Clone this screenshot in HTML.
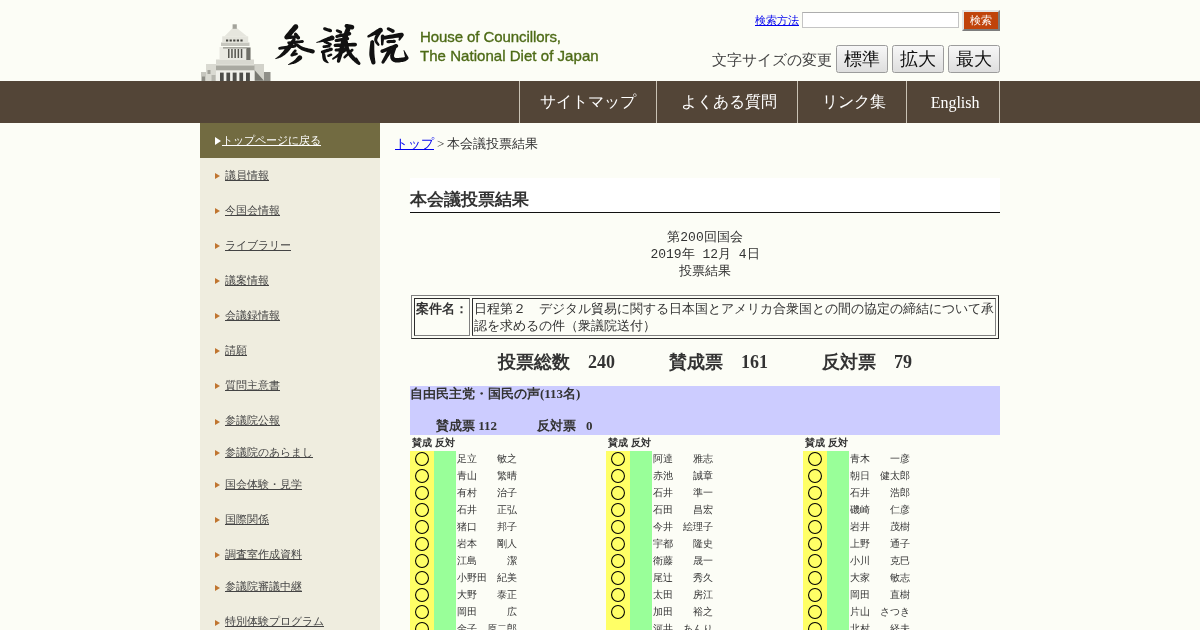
<!DOCTYPE html>
<html lang="ja"><head><meta charset="utf-8"><title>本会議投票結果</title>
<style>
html,body{margin:0;padding:0}
body{width:1200px;height:630px;overflow:hidden;background:#fcfdf6;color:#333;font-family:"Liberation Serif",serif;font-size:13px;position:relative}
a{color:#0000ee}
#hd{position:absolute;left:200px;top:0;width:800px;height:81px}
#hd svg{position:absolute;left:0;top:0}
.en{position:absolute;left:220px;top:26.5px;font-family:"Liberation Sans",sans-serif;font-size:15px;line-height:19.1px;letter-spacing:0.04px;color:#4d6a16;-webkit-text-stroke:0.35px #4d6a16;white-space:nowrap}
.en .l1{letter-spacing:-0.08px}
.sh{position:absolute;left:555px;top:13px;font-size:11px;line-height:14px;white-space:nowrap}
.inp{position:absolute;left:602px;top:12px;width:155px;height:14px;background:#fff;border:1px solid #c4c4c4;border-top-color:#adadad}
.sbtn{position:absolute;left:762px;top:10px;width:34px;height:17px;border:2px solid #e4e4e4;border-right-color:#7d7d7d;border-bottom-color:#7d7d7d;background:#c0430b;color:#fff;font-size:11px;line-height:17px;text-align:center}
.fs{position:absolute;left:512px;top:51px;font-size:15px;line-height:18px;color:#444;white-space:nowrap}
.fb{position:absolute;top:45px;height:26px;border:1px solid #9c9c9c;border-radius:2.5px;background:linear-gradient(#f7f7f7,#dedede);color:#111;font-size:18px;line-height:27px;text-align:center}
#nav{position:absolute;left:0;top:81px;width:1200px;height:42px;background:#534537}
#nav i{position:absolute;top:0;width:1px;height:42px;background:#c9c2b4}
#nav span{position:absolute;top:0;height:42px;line-height:41px;color:#fff;font-size:16px;text-align:center;white-space:nowrap}
#nav span.eng{font-size:16px}
#side{position:absolute;left:200px;top:123px;width:180px;height:507px;background:#efeddf;font-size:11px}
#side .top{position:absolute;left:0;top:0;width:180px;height:35px;background:#726b41}
#side .top a{position:absolute;left:22px;top:10px;line-height:14px;color:#fff;white-space:nowrap}
#side .top .tri{position:absolute;left:14.5px;top:13.5px;border-left:6px solid #fff;border-top:4px solid transparent;border-bottom:4px solid transparent}
.mi{position:absolute;left:0;width:180px;height:16px}
.mi a{position:absolute;left:25px;top:0.3px;line-height:14px;color:#444;white-space:nowrap}
.mi .tri{position:absolute;left:14.7px;top:5.5px;border-left:5px solid #c07530;border-top:3.5px solid transparent;border-bottom:3.5px solid transparent}
#bc{position:absolute;left:395px;top:135px;font-size:13px;line-height:17px;color:#333;white-space:nowrap;word-spacing:-0.35px}
#ttl{position:absolute;left:410px;top:178px;width:590px;height:34px;margin:0;background:#fff;border-bottom:1px solid #111;font-size:17px;line-height:44px;font-weight:bold;color:#333}
#pre{position:absolute;left:410px;top:229px;width:590px;margin:0;text-align:center;font-family:"Liberation Mono",monospace;font-size:13px;line-height:17px;color:#333}
#anken{position:absolute;left:411px;top:295px;width:588px;border-spacing:2px;font-size:13px;line-height:17px;color:#333}
#anken th{vertical-align:top;white-space:nowrap;padding:1px;text-align:left}
#anken td{padding:1px}
#tot{position:absolute;left:410px;top:350px;width:590px;text-align:center;font-size:18px;line-height:24px;font-weight:bold;color:#333;white-space:nowrap}
#party{position:absolute;left:410px;top:386px;width:590px;height:49px;background:#ccccff;font-weight:bold;color:#333;font-size:13px}
#party .pn{position:absolute;left:0px;top:0;line-height:16px;white-space:nowrap}
#party .pv span{position:absolute;top:32px;line-height:16px;white-space:nowrap}
.col{position:absolute;top:435px;width:196px;height:195px;font-size:10px}
.col .ch{position:absolute;left:2px;top:0;height:16px;line-height:15px;font-weight:bold;color:#333}
.col .ch span{position:absolute;left:0;top:0;white-space:nowrap}
.col .ye{position:absolute;left:0;top:16px;width:24px;height:180px;background:#ffff66}
.col .gr{position:absolute;left:24px;top:16px;width:22px;height:180px;background:#99ff99}
.col .r{position:absolute;left:0;width:196px;height:17px}
.col .r span{position:absolute;left:47px;top:-0.5px;line-height:17px;color:#333;white-space:nowrap}
.col .r .o{position:absolute;left:4px;top:0.9px;width:16px;height:16px;overflow:visible}

#wrap{position:absolute;left:0;top:0;width:1200px;height:630px;will-change:opacity}

</style></head><body>
<div id="wrap">
<div id="hd"><svg width="420" height="81" viewBox="200 0 420 81">
<defs><filter id="bl" x="-5%" y="-5%" width="110%" height="110%"><feGaussianBlur stdDeviation="0.35"/></filter></defs>
<g filter="url(#bl)">
<!-- building -->
<rect x="201" y="72" width="6" height="9" fill="#c6c6be"/><rect x="202" y="76.5" width="3" height="4.5" fill="#8d8d86"/>
<rect x="264" y="72" width="6.5" height="9" fill="#8f8f88"/>
<rect x="206" y="64" width="58" height="17" fill="#e4e4dc"/>
<rect x="206" y="64" width="10" height="17" fill="#dadad2"/><rect x="207.5" y="70" width="3" height="4" fill="#a2a29a"/><rect x="211.5" y="75" width="4" height="6" fill="#b6b6ae"/>
<rect x="254" y="64" width="10" height="17" fill="#d2d2ca"/>
<polygon points="254.5,70 264,80.8 254.5,80.8" fill="#77776f"/>
<rect x="216" y="65.5" width="38.5" height="5" fill="#a9a9a1"/>
<rect x="216" y="70.5" width="38.5" height="10.5" fill="#f0f0ea"/>
<rect x="220" y="72.6" width="3.7" height="8.4" fill="#4e4e4a"/>
<rect x="226.4" y="72.6" width="3.7" height="8.4" fill="#4e4e4a"/>
<rect x="232.7" y="72.6" width="3.9" height="8.4" fill="#4e4e4a"/>
<rect x="239.4" y="72.6" width="3.7" height="8.4" fill="#4e4e4a"/>
<rect x="246" y="72.6" width="3.9" height="8.4" fill="#4e4e4a"/>
<rect x="216" y="59.5" width="38" height="5" fill="#d8d8d0"/>
<rect x="219.5" y="47" width="31" height="13" fill="#e9e9e2"/>
<rect x="246.3" y="47.5" width="4.2" height="12.5" fill="#6f6f69"/>
<rect x="223" y="47" width="24" height="1.6" fill="#a6a69e"/>
<rect x="228" y="49" width="1.5" height="9" fill="#55554f"/>
<rect x="231.2" y="49" width="1.5" height="9" fill="#55554f"/>
<rect x="234.4" y="49" width="1.5" height="9" fill="#55554f"/>
<rect x="237.6" y="49" width="1.5" height="9" fill="#55554f"/>
<rect x="240.8" y="49" width="1.5" height="9" fill="#55554f"/>
<rect x="221" y="42.5" width="28.5" height="3.5" fill="#c6c6be"/>
<rect x="222.2" y="36.3" width="26" height="6.5" fill="#e4e4dc"/>
<rect x="226" y="39.5" width="2.2" height="2" fill="#44443f"/>
<rect x="229.6" y="39.5" width="2.2" height="2" fill="#44443f"/>
<rect x="233.2" y="39.5" width="2.2" height="2" fill="#44443f"/>
<rect x="236.8" y="39.5" width="2.2" height="2" fill="#44443f"/>
<rect x="240.4" y="39.5" width="2.2" height="2" fill="#44443f"/>
<polygon points="224.3,36.5 232.6,28 236.8,28 247.3,36.5" fill="#e6e6de"/>
<rect x="232.6" y="24.3" width="4.2" height="4.5" fill="#a3a39b"/>
</g>
<!-- calligraphy -->
<path fill="#111" fill-rule="nonzero" d="M293.8 25.0 L292.7 26.3 L291.6 27.7 L290.4 29.0 L289.3 30.3 L288.2 31.7 L287.1 33.0 L286.0 34.3 L284.9 35.7 L284.3 36.8 L284.4 38.0 L285.1 39.0 L286.2 39.5 L287.4 39.4 L288.4 38.7 L289.6 37.5 L290.7 36.2 L291.9 34.9 L293.1 33.6 L294.2 32.3 L295.4 31.0 L296.6 29.7 L297.7 28.4 L298.3 27.2 L298.2 25.9 L297.5 24.7 L296.3 24.2 L294.9 24.2ZM286.6 39.4 L288.0 39.2 L289.4 39.1 L290.8 38.9 L292.1 38.8 L293.5 38.6 L294.9 38.5 L296.3 38.3 L297.7 38.2 L298.4 37.9 L298.9 37.2 L299.1 36.5 L298.8 35.7 L298.2 35.2 L297.4 35.1 L296.0 35.2 L294.6 35.3 L293.2 35.4 L291.8 35.5 L290.5 35.6 L289.1 35.8 L287.7 35.9 L286.3 36.0 L285.5 36.3 L284.9 37.0 L284.8 37.8 L285.1 38.7 L285.8 39.2ZM294.3 35.4 L294.6 35.8 L294.9 36.2 L295.2 36.7 L295.6 37.1 L295.9 37.5 L296.2 38.0 L296.5 38.4 L296.8 38.9 L297.6 39.4 L298.5 39.5 L299.4 39.2 L300.0 38.4 L300.1 37.5 L299.7 36.6 L299.4 36.2 L299.0 35.8 L298.7 35.4 L298.3 35.0 L298.0 34.5 L297.6 34.1 L297.3 33.7 L296.9 33.3 L296.2 32.8 L295.4 32.6 L294.6 33.0 L294.0 33.7 L293.9 34.5ZM288.7 44.0 L290.5 43.9 L292.2 43.7 L293.9 43.6 L295.7 43.4 L297.4 43.3 L299.1 43.2 L300.9 43.0 L302.6 42.9 L303.3 42.6 L303.8 42.1 L303.9 41.4 L303.6 40.7 L303.1 40.2 L302.3 40.1 L300.6 40.2 L298.9 40.4 L297.1 40.6 L295.4 40.7 L293.7 40.9 L292.0 41.1 L290.2 41.2 L288.5 41.4 L287.9 41.6 L287.4 42.1 L287.3 42.8 L287.5 43.4 L288.1 43.9ZM292.8 38.6 L292.3 39.2 L291.6 40.1 L290.8 41.2 L289.9 42.3 L289.0 43.5 L288.1 44.7 L287.3 45.8 L286.5 46.8 L285.8 47.7 L285.1 48.6 L284.4 49.6 L283.7 50.5 L283.0 51.4 L282.3 52.3 L281.6 53.1 L280.9 53.8 L280.2 54.5 L279.5 55.2 L278.7 55.9 L277.8 56.6 L277.1 57.2 L276.3 57.7 L275.7 58.2 L275.3 58.6 L275.1 58.7 L275.1 58.8 L275.1 59.0 L275.3 59.1 L275.4 59.2 L275.6 59.1 L276.1 58.9 L276.8 58.7 L277.7 58.5 L278.7 58.2 L279.7 57.8 L280.8 57.4 L281.9 56.8 L282.9 56.2 L283.8 55.6 L284.8 54.9 L285.8 54.1 L286.7 53.3 L287.6 52.5 L288.5 51.6 L289.4 50.6 L290.2 49.6 L291.0 48.5 L291.8 47.2 L292.6 45.8 L293.3 44.4 L294.0 43.1 L294.6 42.0 L295.0 41.0 L295.4 40.3 L295.6 39.5 L295.5 38.7 L294.9 38.1 L294.1 37.9 L293.4 38.0ZM279.8 49.7 L281.7 49.5 L283.6 49.2 L285.5 48.9 L287.5 48.7 L289.4 48.4 L291.3 48.1 L293.2 47.9 L295.1 47.6 L295.8 47.3 L296.3 46.6 L296.4 45.8 L296.1 45.1 L295.4 44.6 L294.6 44.5 L292.7 44.8 L290.8 45.1 L288.9 45.4 L287.0 45.7 L285.1 46.0 L283.2 46.3 L281.3 46.6 L279.4 46.9 L278.7 47.2 L278.3 47.8 L278.2 48.5 L278.5 49.2 L279.1 49.7ZM294.1 44.3 L294.6 44.7 L295.3 45.3 L296.1 46.1 L297.1 46.9 L298.1 47.8 L299.3 48.7 L300.5 49.5 L301.7 50.2 L303.1 50.8 L304.5 51.3 L306.1 51.8 L307.6 52.2 L309.1 52.6 L310.4 52.9 L311.5 53.2 L312.2 53.4 L313.3 53.4 L314.2 52.8 L314.8 51.9 L314.7 50.8 L314.2 49.9 L313.2 49.4 L312.4 49.2 L311.3 48.9 L310.0 48.7 L308.5 48.4 L307.1 48.0 L305.6 47.7 L304.3 47.3 L303.2 46.9 L302.2 46.4 L301.1 45.9 L300.0 45.2 L299.0 44.5 L297.9 43.8 L297.0 43.2 L296.2 42.6 L295.6 42.2 L295.0 41.9 L294.3 42.0 L293.8 42.4 L293.6 43.1 L293.7 43.7ZM294.1 49.9 L293.7 50.5 L293.3 51.0 L292.8 51.6 L292.4 52.1 L292.0 52.7 L291.5 53.3 L291.1 53.8 L290.6 54.4 L290.4 55.0 L290.4 55.6 L290.8 56.2 L291.4 56.5 L292.1 56.4 L292.7 56.0 L293.1 55.5 L293.6 54.9 L294.0 54.4 L294.5 53.9 L295.0 53.4 L295.4 52.8 L295.9 52.3 L296.3 51.8 L296.6 51.1 L296.6 50.3 L296.1 49.7 L295.5 49.4 L294.7 49.5ZM292.0 56.5 L292.6 56.4 L293.2 56.2 L293.8 56.0 L294.5 55.8 L295.1 55.7 L295.7 55.5 L296.3 55.3 L296.9 55.1 L297.5 54.8 L297.8 54.2 L297.8 53.5 L297.4 52.9 L296.8 52.6 L296.1 52.7 L295.5 52.9 L294.9 53.1 L294.3 53.3 L293.7 53.5 L293.1 53.7 L292.5 53.9 L291.9 54.1 L291.3 54.3 L290.8 54.6 L290.5 55.2 L290.5 55.8 L290.9 56.3 L291.4 56.6ZM298.1 55.9 L297.8 56.3 L297.4 56.8 L296.9 57.4 L296.3 58.1 L295.8 58.8 L295.2 59.4 L294.6 60.0 L294.0 60.6 L293.4 61.0 L292.7 61.6 L291.8 62.1 L291.0 62.6 L290.1 63.1 L289.4 63.5 L288.7 63.9 L288.2 64.2 L288.1 64.3 L288.0 64.5 L288.0 64.7 L288.1 64.9 L288.3 64.9 L288.5 64.9 L289.1 64.8 L289.8 64.7 L290.7 64.5 L291.6 64.3 L292.7 64.1 L293.7 63.9 L294.7 63.6 L295.7 63.2 L296.6 62.8 L297.4 62.3 L298.3 61.7 L299.1 61.2 L299.9 60.6 L300.5 60.2 L301.1 59.8 L301.4 59.5 L302.1 58.5 L302.2 57.2 L301.6 56.0 L300.6 55.4 L299.3 55.3ZM324.2 30.2 L324.9 30.5 L325.6 30.7 L326.3 31.0 L327.0 31.3 L327.7 31.5 L328.4 31.8 L329.1 32.0 L329.8 32.3 L330.7 32.3 L331.5 31.9 L332.0 31.2 L332.0 30.3 L331.6 29.5 L330.9 29.1 L330.2 28.8 L329.5 28.6 L328.8 28.4 L328.0 28.2 L327.3 27.9 L326.6 27.7 L325.9 27.5 L325.2 27.3 L324.4 27.2 L323.6 27.6 L323.2 28.3 L323.1 29.1 L323.5 29.8ZM316.8 42.9 L317.5 42.8 L318.5 42.6 L319.6 42.5 L320.9 42.3 L322.2 42.1 L323.6 41.9 L324.8 41.8 L325.9 41.6 L326.9 41.4 L328.0 41.2 L329.0 41.1 L329.9 40.9 L330.8 40.7 L331.6 40.6 L332.3 40.4 L332.8 40.3 L333.9 39.7 L334.5 38.6 L334.5 37.3 L333.8 36.2 L332.7 35.6 L331.4 35.6 L330.9 35.8 L330.3 36.1 L329.6 36.4 L328.7 36.7 L327.8 37.1 L326.9 37.5 L325.9 37.9 L325.0 38.3 L323.9 38.8 L322.8 39.3 L321.6 39.8 L320.4 40.4 L319.2 40.9 L318.1 41.4 L317.2 41.8 L316.6 42.1 L316.4 42.2 L316.3 42.4 L316.3 42.6 L316.4 42.8 L316.6 42.9ZM324.1 42.9 L324.8 43.2 L325.5 43.6 L326.2 43.9 L326.9 44.3 L327.7 44.6 L328.4 45.0 L329.1 45.3 L329.8 45.7 L330.5 45.8 L331.2 45.6 L331.7 45.0 L331.8 44.3 L331.6 43.6 L331.0 43.1 L330.3 42.8 L329.5 42.4 L328.8 42.1 L328.1 41.8 L327.4 41.5 L326.7 41.2 L325.9 40.9 L325.2 40.5 L324.6 40.4 L323.9 40.6 L323.5 41.2 L323.4 41.8 L323.6 42.5ZM324.0 48.1 L324.7 48.0 L325.3 48.0 L326.0 47.9 L326.7 47.8 L327.3 47.8 L328.0 47.7 L328.7 47.6 L329.3 47.6 L330.0 47.4 L330.4 46.9 L330.5 46.2 L330.3 45.6 L329.8 45.1 L329.1 45.0 L328.5 45.0 L327.8 45.1 L327.1 45.1 L326.5 45.1 L325.8 45.1 L325.1 45.2 L324.5 45.2 L323.8 45.2 L323.1 45.5 L322.6 46.0 L322.5 46.8 L322.7 47.5 L323.3 48.0ZM322.8 53.5 L323.9 53.2 L325.0 52.9 L326.1 52.5 L327.2 52.2 L328.3 51.9 L329.4 51.6 L330.5 51.3 L331.6 51.0 L332.4 50.5 L332.8 49.7 L332.8 48.8 L332.3 48.1 L331.5 47.7 L330.7 47.7 L329.6 48.1 L328.5 48.4 L327.4 48.8 L326.3 49.1 L325.2 49.5 L324.1 49.8 L323.0 50.2 L321.9 50.5 L321.2 50.9 L320.9 51.6 L320.9 52.5 L321.3 53.1 L322.0 53.5ZM322.0 53.8 L322.0 54.2 L322.1 54.9 L322.1 55.7 L322.2 56.6 L322.3 57.6 L322.5 58.6 L322.8 59.5 L323.2 60.4 L323.7 61.1 L324.4 61.7 L325.1 62.1 L325.7 62.5 L326.4 62.7 L326.9 62.9 L327.4 63.1 L327.7 63.2 L328.0 63.3 L328.3 63.3 L328.6 63.1 L328.7 62.8 L328.7 62.4 L328.5 62.2 L328.2 61.9 L327.9 61.5 L327.5 61.0 L327.2 60.6 L326.8 60.1 L326.5 59.6 L326.3 59.2 L326.2 58.9 L326.1 58.4 L325.9 57.8 L325.7 57.0 L325.6 56.1 L325.4 55.3 L325.3 54.5 L325.2 53.8 L325.1 53.3 L324.7 52.6 L324.1 52.1 L323.3 52.0 L322.6 52.3 L322.1 52.9ZM329.0 57.0 L329.3 56.8 L329.6 56.7 L330.0 56.5 L330.3 56.4 L330.6 56.2 L330.9 56.1 L331.3 55.9 L331.6 55.7 L332.1 55.4 L332.3 54.8 L332.2 54.2 L331.8 53.7 L331.3 53.5 L330.7 53.6 L330.3 53.7 L330.0 53.8 L329.7 54.0 L329.3 54.1 L329.0 54.2 L328.6 54.4 L328.3 54.5 L328.0 54.6 L327.4 55.0 L327.2 55.7 L327.3 56.3 L327.7 56.9 L328.3 57.1ZM346.1 28.0 L346.8 28.2 L347.4 28.4 L348.1 28.5 L348.8 28.7 L349.4 28.9 L350.1 29.1 L350.7 29.3 L351.4 29.5 L352.6 29.5 L353.6 28.9 L354.2 27.8 L354.2 26.6 L353.6 25.5 L352.5 25.0 L351.8 24.8 L351.1 24.7 L350.5 24.6 L349.8 24.4 L349.1 24.3 L348.4 24.2 L347.8 24.1 L347.1 23.9 L346.0 23.9 L345.1 24.5 L344.6 25.5 L344.6 26.5 L345.2 27.4ZM346.5 26.5 L346.0 27.6 L345.4 29.2 L344.7 31.0 L344.0 33.1 L343.1 35.3 L342.3 37.6 L341.6 39.9 L340.9 42.1 L340.3 44.5 L339.7 47.1 L339.1 49.8 L338.5 52.5 L338.0 55.0 L337.6 57.3 L337.2 59.3 L336.9 60.7 L336.9 61.6 L337.4 62.4 L338.1 62.8 L339.0 62.8 L339.7 62.3 L340.2 61.6 L340.6 60.1 L341.2 58.3 L341.9 56.0 L342.7 53.5 L343.5 50.9 L344.3 48.3 L345.1 45.8 L345.8 43.6 L346.4 41.4 L347.2 39.2 L347.9 36.9 L348.6 34.7 L349.3 32.7 L350.0 30.8 L350.5 29.2 L350.9 28.0 L351.0 26.8 L350.4 25.7 L349.4 25.0 L348.2 24.9 L347.1 25.5ZM336.7 32.0 L337.1 32.2 L337.5 32.4 L337.9 32.6 L338.3 32.8 L338.8 33.0 L339.2 33.2 L339.6 33.4 L340.0 33.6 L340.8 33.7 L341.6 33.5 L342.1 32.8 L342.2 32.0 L341.9 31.3 L341.3 30.8 L340.9 30.6 L340.4 30.4 L340.0 30.2 L339.6 30.1 L339.1 29.9 L338.7 29.7 L338.3 29.5 L337.8 29.4 L337.1 29.2 L336.4 29.5 L335.9 30.1 L335.8 30.8 L336.1 31.5ZM337.2 37.9 L338.8 37.6 L340.3 37.3 L341.9 37.0 L343.5 36.7 L345.1 36.4 L346.6 36.1 L348.2 35.8 L349.8 35.5 L350.6 35.1 L351.2 34.3 L351.2 33.3 L350.8 32.5 L350.0 32.0 L349.1 31.9 L347.5 32.3 L345.9 32.7 L344.4 33.0 L342.8 33.4 L341.2 33.8 L339.7 34.1 L338.1 34.5 L336.5 34.9 L335.8 35.2 L335.4 35.9 L335.3 36.7 L335.7 37.4 L336.4 37.9ZM336.4 42.1 L337.8 41.9 L339.2 41.7 L340.6 41.4 L342.1 41.2 L343.5 41.0 L344.9 40.8 L346.4 40.6 L347.8 40.3 L348.6 40.0 L349.1 39.3 L349.2 38.4 L348.8 37.6 L348.1 37.1 L347.2 37.0 L345.8 37.3 L344.4 37.5 L343.0 37.8 L341.5 38.0 L340.1 38.3 L338.7 38.5 L337.3 38.8 L335.8 39.0 L335.1 39.4 L334.6 40.0 L334.6 40.8 L334.9 41.6 L335.5 42.0ZM335.4 47.1 L337.9 47.0 L340.4 46.9 L342.8 46.8 L345.3 46.7 L347.8 46.6 L350.3 46.5 L352.7 46.4 L355.2 46.4 L356.1 46.1 L356.8 45.4 L357.0 44.5 L356.7 43.6 L356.0 42.9 L355.1 42.7 L352.6 42.8 L350.1 43.0 L347.6 43.1 L345.2 43.2 L342.7 43.3 L340.2 43.4 L337.7 43.6 L335.3 43.7 L334.4 43.9 L333.8 44.6 L333.6 45.4 L333.9 46.3 L334.6 46.9ZM336.3 51.6 L337.7 51.5 L339.2 51.3 L340.6 51.1 L342.0 50.9 L343.4 50.7 L344.9 50.5 L346.3 50.3 L347.7 50.1 L348.5 49.8 L349.0 49.2 L349.1 48.4 L348.8 47.6 L348.1 47.1 L347.3 47.0 L345.9 47.2 L344.5 47.4 L343.0 47.6 L341.6 47.8 L340.2 48.0 L338.7 48.2 L337.3 48.4 L335.9 48.5 L335.1 48.9 L334.7 49.5 L334.5 50.3 L334.9 51.0 L335.5 51.5ZM343.5 49.1 L342.1 50.2 L340.7 51.4 L339.4 52.5 L338.0 53.6 L336.6 54.7 L335.3 55.9 L333.9 57.0 L332.5 58.1 L332.2 58.5 L332.1 59.0 L332.3 59.4 L332.7 59.7 L333.1 59.8 L333.6 59.6 L335.1 58.6 L336.6 57.7 L338.0 56.7 L339.5 55.7 L341.0 54.7 L342.5 53.8 L344.0 52.8 L345.5 51.8 L346.0 51.2 L346.2 50.3 L345.8 49.5 L345.2 48.9 L344.3 48.8ZM344.5 40.0 L344.5 40.7 L344.6 41.7 L344.6 42.9 L344.7 44.2 L344.8 45.6 L345.0 47.0 L345.2 48.3 L345.5 49.5 L345.9 50.6 L346.3 51.6 L346.7 52.6 L347.2 53.5 L347.7 54.3 L348.2 55.1 L348.7 55.9 L349.3 56.7 L349.9 57.5 L350.6 58.3 L351.3 59.0 L352.0 59.8 L352.7 60.4 L353.4 61.1 L354.0 61.6 L354.5 62.2 L355.1 62.6 L355.6 63.1 L356.1 63.4 L356.6 63.8 L357.0 64.0 L357.4 64.3 L357.7 64.5 L357.9 64.6 L358.7 65.0 L359.5 64.9 L360.1 64.4 L360.5 63.7 L360.4 62.9 L360.0 62.2 L359.7 62.0 L359.5 61.7 L359.2 61.4 L358.9 61.1 L358.5 60.7 L358.1 60.3 L357.7 59.9 L357.3 59.4 L356.8 58.8 L356.2 58.2 L355.6 57.6 L354.9 56.9 L354.3 56.2 L353.7 55.5 L353.1 54.9 L352.6 54.2 L352.1 53.5 L351.6 52.8 L351.2 52.1 L350.7 51.4 L350.3 50.7 L349.9 50.0 L349.6 49.2 L349.2 48.4 L348.9 47.4 L348.7 46.3 L348.4 45.1 L348.2 43.8 L348.0 42.5 L347.8 41.3 L347.7 40.4 L347.5 39.6 L347.2 38.9 L346.6 38.4 L345.8 38.3 L345.1 38.6 L344.6 39.2ZM360.3 62.8 L359.8 62.2 L359.4 61.6 L359.0 61.0 L358.6 60.4 L358.2 59.7 L357.8 59.1 L357.4 58.5 L357.0 57.9 L356.8 57.7 L356.6 57.6 L356.3 57.6 L356.1 57.8 L356.0 58.0 L356.0 58.3 L356.2 59.0 L356.4 59.7 L356.6 60.5 L356.8 61.2 L357.0 61.9 L357.2 62.6 L357.5 63.3 L357.7 64.0 L358.1 64.6 L358.8 64.9 L359.5 64.7 L360.1 64.3 L360.4 63.6ZM351.1 49.1 L350.2 50.0 L349.3 50.9 L348.3 51.8 L347.4 52.8 L346.5 53.7 L345.5 54.6 L344.6 55.6 L343.7 56.5 L343.4 57.0 L343.3 57.6 L343.6 58.1 L344.1 58.5 L344.7 58.5 L345.3 58.2 L346.3 57.3 L347.2 56.4 L348.2 55.5 L349.2 54.7 L350.2 53.8 L351.1 52.9 L352.1 52.0 L353.1 51.1 L353.5 50.5 L353.5 49.8 L353.1 49.1 L352.5 48.7 L351.8 48.7ZM369.0 37.4 L370.6 36.8 L372.1 36.2 L373.7 35.6 L375.2 35.0 L376.8 34.4 L378.4 33.8 L379.9 33.2 L381.5 32.6 L382.5 31.7 L382.9 30.4 L382.6 29.1 L381.7 28.1 L380.4 27.7 L379.1 28.0 L377.7 28.9 L376.3 29.8 L374.9 30.7 L373.5 31.7 L372.1 32.6 L370.7 33.5 L369.3 34.4 L367.9 35.3 L367.5 35.7 L367.3 36.3 L367.4 36.9 L367.8 37.4 L368.4 37.5ZM378.4 29.7 L378.1 30.4 L377.6 31.4 L376.9 32.5 L376.2 33.8 L375.5 35.2 L374.9 36.6 L374.4 37.9 L374.2 39.2 L374.2 40.5 L374.6 41.6 L375.1 42.6 L375.7 43.4 L376.2 44.1 L376.8 44.7 L377.2 45.1 L377.4 45.4 L377.9 45.8 L378.4 45.9 L379.0 45.7 L379.4 45.3 L379.5 44.7 L379.4 44.1 L379.1 43.7 L378.7 43.1 L378.3 42.5 L377.9 41.9 L377.5 41.2 L377.3 40.6 L377.2 40.1 L377.3 39.6 L377.5 38.9 L377.9 38.0 L378.6 36.8 L379.3 35.6 L380.1 34.4 L380.8 33.3 L381.4 32.3 L381.8 31.6 L382.1 30.6 L381.8 29.7 L381.1 29.0 L380.1 28.7 L379.1 29.0ZM370.3 42.0 L370.2 43.0 L370.1 44.3 L369.9 45.8 L369.7 47.6 L369.5 49.4 L369.4 51.2 L369.3 52.9 L369.3 54.4 L369.4 55.8 L369.7 57.2 L370.0 58.5 L370.3 59.7 L370.7 60.7 L371.0 61.6 L371.2 62.4 L371.4 63.0 L371.9 63.9 L372.8 64.5 L373.9 64.5 L374.8 64.1 L375.4 63.2 L375.5 62.1 L375.4 61.4 L375.2 60.6 L375.1 59.7 L375.0 58.6 L374.8 57.6 L374.7 56.4 L374.6 55.3 L374.5 54.1 L374.4 52.8 L374.4 51.3 L374.3 49.6 L374.3 47.8 L374.3 46.1 L374.3 44.5 L374.2 43.2 L374.2 42.2 L374.0 41.2 L373.3 40.5 L372.4 40.1 L371.4 40.4 L370.6 41.0ZM387.6 30.2 L388.1 30.5 L388.7 30.8 L389.3 31.1 L389.8 31.4 L390.4 31.7 L390.9 32.0 L391.5 32.4 L392.0 32.7 L393.0 32.9 L393.9 32.6 L394.5 31.9 L394.7 30.9 L394.4 30.0 L393.7 29.4 L393.1 29.2 L392.5 28.9 L391.9 28.6 L391.3 28.4 L390.7 28.1 L390.2 27.9 L389.6 27.6 L389.0 27.4 L388.2 27.2 L387.4 27.5 L386.9 28.1 L386.7 28.9 L387.0 29.6ZM380.8 36.3 L380.8 37.3 L380.8 38.3 L380.9 39.3 L380.9 40.3 L380.9 41.3 L381.0 42.3 L381.0 43.3 L381.0 44.3 L381.2 44.9 L381.6 45.4 L382.1 45.5 L382.7 45.4 L383.2 45.0 L383.4 44.4 L383.5 43.4 L383.6 42.4 L383.7 41.4 L383.9 40.5 L384.0 39.5 L384.1 38.5 L384.3 37.5 L384.4 36.5 L384.2 35.5 L383.6 34.8 L382.7 34.6 L381.7 34.8 L381.0 35.4ZM383.2 39.7 L385.6 39.4 L387.9 39.0 L390.3 38.7 L392.6 38.4 L395.0 38.0 L397.3 37.7 L399.6 37.4 L402.0 37.0 L403.0 36.6 L403.7 35.6 L403.8 34.5 L403.3 33.5 L402.4 32.8 L401.3 32.7 L398.9 33.1 L396.6 33.5 L394.3 34.0 L392.0 34.4 L389.6 34.8 L387.3 35.3 L385.0 35.7 L382.7 36.1 L381.8 36.5 L381.3 37.3 L381.2 38.2 L381.5 39.1 L382.3 39.6ZM399.9 33.9 L399.7 34.6 L399.6 35.3 L399.4 36.0 L399.2 36.7 L399.0 37.4 L398.9 38.0 L398.7 38.7 L398.5 39.4 L398.4 39.9 L398.6 40.3 L398.9 40.6 L399.4 40.7 L399.8 40.6 L400.1 40.2 L400.6 39.7 L401.0 39.1 L401.5 38.5 L401.9 38.0 L402.3 37.4 L402.8 36.9 L403.2 36.3 L403.6 35.8 L403.8 34.7 L403.5 33.7 L402.7 33.0 L401.6 32.8 L400.6 33.1ZM388.0 43.3 L388.8 43.2 L389.6 43.2 L390.4 43.1 L391.2 43.1 L392.0 43.0 L392.9 43.0 L393.7 42.9 L394.5 42.9 L395.2 42.6 L395.8 42.0 L395.9 41.2 L395.7 40.5 L395.1 39.9 L394.3 39.8 L393.5 39.8 L392.7 39.9 L391.9 39.9 L391.1 40.0 L390.2 40.0 L389.4 40.1 L388.6 40.1 L387.8 40.2 L387.0 40.4 L386.5 41.0 L386.3 41.8 L386.6 42.6 L387.2 43.1ZM382.8 52.9 L384.6 52.3 L386.4 51.6 L388.1 51.0 L389.9 50.3 L391.7 49.7 L393.4 49.0 L395.2 48.4 L397.0 47.7 L397.8 47.1 L398.2 46.2 L398.1 45.2 L397.5 44.4 L396.6 44.0 L395.6 44.1 L393.8 44.8 L392.1 45.4 L390.3 46.1 L388.6 46.8 L386.8 47.5 L385.1 48.2 L383.3 48.9 L381.5 49.5 L380.8 50.1 L380.4 50.9 L380.5 51.9 L381.0 52.6 L381.9 53.0ZM387.9 49.4 L387.1 50.9 L386.3 52.4 L385.5 53.9 L384.8 55.4 L384.0 57.0 L383.2 58.5 L382.4 60.0 L381.6 61.5 L381.4 62.3 L381.6 63.1 L382.2 63.6 L382.9 63.8 L383.7 63.6 L384.3 63.1 L385.2 61.6 L386.2 60.2 L387.1 58.8 L388.0 57.3 L388.9 55.9 L389.9 54.5 L390.8 53.0 L391.7 51.6 L392.0 50.5 L391.7 49.4 L390.9 48.6 L389.8 48.3 L388.7 48.6ZM393.2 46.9 L392.9 47.5 L392.5 48.4 L392.1 49.5 L391.6 50.7 L391.1 52.0 L390.6 53.3 L390.3 54.6 L390.1 55.7 L390.2 56.8 L390.3 57.7 L390.5 58.7 L391.0 59.6 L391.5 60.4 L392.3 61.1 L393.1 61.7 L394.1 62.1 L395.3 62.4 L396.5 62.5 L397.8 62.5 L399.1 62.4 L400.3 62.3 L401.5 62.1 L402.6 62.0 L403.5 61.8 L404.4 61.6 L405.2 61.3 L405.9 60.9 L406.4 60.6 L406.9 60.2 L407.3 60.0 L407.5 59.8 L407.7 59.6 L408.3 59.1 L408.6 58.2 L408.5 57.4 L407.9 56.7 L407.1 56.4 L406.2 56.6 L405.9 56.7 L405.5 56.8 L405.1 57.0 L404.7 57.1 L404.3 57.2 L403.8 57.3 L403.3 57.4 L402.8 57.4 L401.9 57.5 L400.9 57.7 L399.8 57.8 L398.7 57.9 L397.6 58.0 L396.6 58.0 L395.9 58.0 L395.4 57.9 L395.1 57.8 L394.9 57.7 L394.7 57.5 L394.5 57.3 L394.4 57.1 L394.2 56.8 L394.1 56.4 L394.0 55.9 L394.1 55.2 L394.3 54.3 L394.6 53.2 L395.0 52.0 L395.4 50.8 L395.8 49.7 L396.1 48.7 L396.4 48.0 L396.4 47.1 L396.1 46.3 L395.3 45.8 L394.5 45.8 L393.7 46.1ZM408.5 57.5 L408.0 56.6 L407.5 55.7 L406.9 54.8 L406.4 53.9 L405.9 53.0 L405.3 52.1 L404.8 51.2 L404.3 50.3 L404.1 50.2 L404.0 50.1 L403.8 50.1 L403.6 50.2 L403.5 50.4 L403.5 50.6 L403.8 51.6 L404.0 52.6 L404.2 53.7 L404.5 54.7 L404.7 55.7 L404.9 56.7 L405.2 57.7 L405.4 58.7 L405.9 59.4 L406.7 59.8 L407.6 59.7 L408.3 59.1 L408.6 58.3Z"/>
</svg>

<div class="en"><span class="l1">House of Councillors,</span><br>The National Diet of Japan</div>
<a class="sh" href="#">検索方法</a><div class="inp"></div><div class="sbtn">検索</div>
<div class="fs">文字サイズの変更</div>
<div class="fb" style="left:636px;width:50px">標準</div><div class="fb" style="left:692px;width:50px">拡大</div><div class="fb" style="left:748px;width:50px">最大</div>
</div>
<div id="nav"><i style="left:519px"></i><i style="left:656px"></i><i style="left:797px"></i><i style="left:906px"></i><i style="left:999px"></i>
<span style="left:520px;width:136px">サイトマップ</span><span style="left:659px;width:140px">よくある質問</span><span style="left:799.2px;width:109px">リンク集</span><span class="eng" style="left:909.6px;width:91px;top:1px">English</span></div>
<div id="side"><div class="top"><b class="tri"></b><a href="#">トップページに戻る</a></div>
<div class="mi" style="top:44.5px"><b class="tri"></b><a href="#">議員情報</a></div>
<div class="mi" style="top:79.5px"><b class="tri"></b><a href="#">今国会情報</a></div>
<div class="mi" style="top:114.5px"><b class="tri"></b><a href="#">ライブラリー</a></div>
<div class="mi" style="top:149.5px"><b class="tri"></b><a href="#">議案情報</a></div>
<div class="mi" style="top:184.5px"><b class="tri"></b><a href="#">会議録情報</a></div>
<div class="mi" style="top:219.5px"><b class="tri"></b><a href="#">請願</a></div>
<div class="mi" style="top:254.5px"><b class="tri"></b><a href="#">質問主意書</a></div>
<div class="mi" style="top:290.2px"><b class="tri"></b><a href="#">参議院公報</a></div>
<div class="mi" style="top:321.7px"><b class="tri"></b><a href="#">参議院のあらまし</a></div>
<div class="mi" style="top:353.6px"><b class="tri"></b><a href="#">国会体験・見学</a></div>
<div class="mi" style="top:388.3px"><b class="tri"></b><a href="#">国際関係</a></div>
<div class="mi" style="top:423.4px"><b class="tri"></b><a href="#">調査室作成資料</a></div>
<div class="mi" style="top:456.2px"><b class="tri"></b><a href="#">参議院審議中継</a></div>
<div class="mi" style="top:491.0px"><b class="tri"></b><a href="#">特別体験プログラム</a></div>
</div>
<div id="bc"><a href="#">トップ</a> &gt; 本会議投票結果</div>
<h2 id="ttl">本会議投票結果</h2>
<pre id="pre">第200回国会
2019年 12月 4日
投票結果</pre>
<table id="anken" border="1"><tr><th>案件名：</th><td>日程第２　デジタル貿易に関する日本国とアメリカ合衆国との間の協定の締結について承認を求めるの件（衆議院送付）</td></tr></table>
<div id="tot">投票総数　240　　　賛成票　161　　　反対票　79</div>
<div id="party"><div class="pn">自由民主党・国民の声(113名)</div><div class="pv"><span style="left:26px">賛成票 112</span><span style="left:127.3px">反対票 &nbsp;&nbsp;0</span></div></div>
<div class="col" style="left:410.00px"><div class="ch"><span>賛成</span><span style="left:23px">反対</span></div><div class="ye"></div><div class="gr"></div>
<div class="r" style="top:15px"><svg class="o" viewBox="0 0 16 16"><circle cx="8" cy="8" r="6.45" fill="none" stroke="#000" stroke-width="1.05"/></svg><span>足立　　敏之</span></div>
<div class="r" style="top:32px"><svg class="o" viewBox="0 0 16 16"><circle cx="8" cy="8" r="6.45" fill="none" stroke="#000" stroke-width="1.05"/></svg><span>青山　　繁晴</span></div>
<div class="r" style="top:49px"><svg class="o" viewBox="0 0 16 16"><circle cx="8" cy="8" r="6.45" fill="none" stroke="#000" stroke-width="1.05"/></svg><span>有村　　治子</span></div>
<div class="r" style="top:66px"><svg class="o" viewBox="0 0 16 16"><circle cx="8" cy="8" r="6.45" fill="none" stroke="#000" stroke-width="1.05"/></svg><span>石井　　正弘</span></div>
<div class="r" style="top:83px"><svg class="o" viewBox="0 0 16 16"><circle cx="8" cy="8" r="6.45" fill="none" stroke="#000" stroke-width="1.05"/></svg><span>猪口　　邦子</span></div>
<div class="r" style="top:100px"><svg class="o" viewBox="0 0 16 16"><circle cx="8" cy="8" r="6.45" fill="none" stroke="#000" stroke-width="1.05"/></svg><span>岩本　　剛人</span></div>
<div class="r" style="top:117px"><svg class="o" viewBox="0 0 16 16"><circle cx="8" cy="8" r="6.45" fill="none" stroke="#000" stroke-width="1.05"/></svg><span>江島　　　潔</span></div>
<div class="r" style="top:134px"><svg class="o" viewBox="0 0 16 16"><circle cx="8" cy="8" r="6.45" fill="none" stroke="#000" stroke-width="1.05"/></svg><span>小野田　紀美</span></div>
<div class="r" style="top:151px"><svg class="o" viewBox="0 0 16 16"><circle cx="8" cy="8" r="6.45" fill="none" stroke="#000" stroke-width="1.05"/></svg><span>大野　　泰正</span></div>
<div class="r" style="top:168px"><svg class="o" viewBox="0 0 16 16"><circle cx="8" cy="8" r="6.45" fill="none" stroke="#000" stroke-width="1.05"/></svg><span>岡田　　　広</span></div>
<div class="r" style="top:185px"><svg class="o" viewBox="0 0 16 16"><circle cx="8" cy="8" r="6.45" fill="none" stroke="#000" stroke-width="1.05"/></svg><span>金子　原二郎</span></div>
</div>
<div class="col" style="left:606.00px"><div class="ch"><span>賛成</span><span style="left:23px">反対</span></div><div class="ye"></div><div class="gr"></div>
<div class="r" style="top:15px"><svg class="o" viewBox="0 0 16 16"><circle cx="8" cy="8" r="6.45" fill="none" stroke="#000" stroke-width="1.05"/></svg><span>阿達　　雅志</span></div>
<div class="r" style="top:32px"><svg class="o" viewBox="0 0 16 16"><circle cx="8" cy="8" r="6.45" fill="none" stroke="#000" stroke-width="1.05"/></svg><span>赤池　　誠章</span></div>
<div class="r" style="top:49px"><svg class="o" viewBox="0 0 16 16"><circle cx="8" cy="8" r="6.45" fill="none" stroke="#000" stroke-width="1.05"/></svg><span>石井　　準一</span></div>
<div class="r" style="top:66px"><svg class="o" viewBox="0 0 16 16"><circle cx="8" cy="8" r="6.45" fill="none" stroke="#000" stroke-width="1.05"/></svg><span>石田　　昌宏</span></div>
<div class="r" style="top:83px"><svg class="o" viewBox="0 0 16 16"><circle cx="8" cy="8" r="6.45" fill="none" stroke="#000" stroke-width="1.05"/></svg><span>今井　絵理子</span></div>
<div class="r" style="top:100px"><svg class="o" viewBox="0 0 16 16"><circle cx="8" cy="8" r="6.45" fill="none" stroke="#000" stroke-width="1.05"/></svg><span>宇都　　隆史</span></div>
<div class="r" style="top:117px"><svg class="o" viewBox="0 0 16 16"><circle cx="8" cy="8" r="6.45" fill="none" stroke="#000" stroke-width="1.05"/></svg><span>衛藤　　晟一</span></div>
<div class="r" style="top:134px"><svg class="o" viewBox="0 0 16 16"><circle cx="8" cy="8" r="6.45" fill="none" stroke="#000" stroke-width="1.05"/></svg><span>尾辻　　秀久</span></div>
<div class="r" style="top:151px"><svg class="o" viewBox="0 0 16 16"><circle cx="8" cy="8" r="6.45" fill="none" stroke="#000" stroke-width="1.05"/></svg><span>太田　　房江</span></div>
<div class="r" style="top:168px"><svg class="o" viewBox="0 0 16 16"><circle cx="8" cy="8" r="6.45" fill="none" stroke="#000" stroke-width="1.05"/></svg><span>加田　　裕之</span></div>
<div class="r" style="top:185px"><span>河井　あんり</span></div>
</div>
<div class="col" style="left:803.00px"><div class="ch"><span>賛成</span><span style="left:23px">反対</span></div><div class="ye"></div><div class="gr"></div>
<div class="r" style="top:15px"><svg class="o" viewBox="0 0 16 16"><circle cx="8" cy="8" r="6.45" fill="none" stroke="#000" stroke-width="1.05"/></svg><span>青木　　一彦</span></div>
<div class="r" style="top:32px"><svg class="o" viewBox="0 0 16 16"><circle cx="8" cy="8" r="6.45" fill="none" stroke="#000" stroke-width="1.05"/></svg><span>朝日　健太郎</span></div>
<div class="r" style="top:49px"><svg class="o" viewBox="0 0 16 16"><circle cx="8" cy="8" r="6.45" fill="none" stroke="#000" stroke-width="1.05"/></svg><span>石井　　浩郎</span></div>
<div class="r" style="top:66px"><svg class="o" viewBox="0 0 16 16"><circle cx="8" cy="8" r="6.45" fill="none" stroke="#000" stroke-width="1.05"/></svg><span>磯崎　　仁彦</span></div>
<div class="r" style="top:83px"><svg class="o" viewBox="0 0 16 16"><circle cx="8" cy="8" r="6.45" fill="none" stroke="#000" stroke-width="1.05"/></svg><span>岩井　　茂樹</span></div>
<div class="r" style="top:100px"><svg class="o" viewBox="0 0 16 16"><circle cx="8" cy="8" r="6.45" fill="none" stroke="#000" stroke-width="1.05"/></svg><span>上野　　通子</span></div>
<div class="r" style="top:117px"><svg class="o" viewBox="0 0 16 16"><circle cx="8" cy="8" r="6.45" fill="none" stroke="#000" stroke-width="1.05"/></svg><span>小川　　克巳</span></div>
<div class="r" style="top:134px"><svg class="o" viewBox="0 0 16 16"><circle cx="8" cy="8" r="6.45" fill="none" stroke="#000" stroke-width="1.05"/></svg><span>大家　　敏志</span></div>
<div class="r" style="top:151px"><svg class="o" viewBox="0 0 16 16"><circle cx="8" cy="8" r="6.45" fill="none" stroke="#000" stroke-width="1.05"/></svg><span>岡田　　直樹</span></div>
<div class="r" style="top:168px"><svg class="o" viewBox="0 0 16 16"><circle cx="8" cy="8" r="6.45" fill="none" stroke="#000" stroke-width="1.05"/></svg><span>片山　さつき</span></div>
<div class="r" style="top:185px"><svg class="o" viewBox="0 0 16 16"><circle cx="8" cy="8" r="6.45" fill="none" stroke="#000" stroke-width="1.05"/></svg><span>北村　　経夫</span></div>
</div>
</div>
</body></html>
